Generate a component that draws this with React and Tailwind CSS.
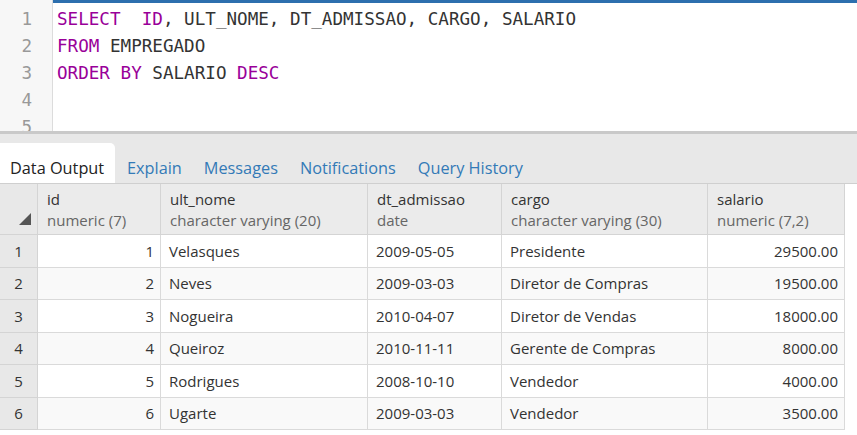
import React from "react";

const rows = [
  [1, "Velasques", "2009-05-05", "Presidente", "29500.00"],
  [2, "Neves", "2009-03-03", "Diretor de Compras", "19500.00"],
  [3, "Nogueira", "2010-04-07", "Diretor de Vendas", "18000.00"],
  [4, "Queiroz", "2010-11-11", "Gerente de Compras", "8000.00"],
  [5, "Rodrigues", "2008-10-10", "Vendedor", "4000.00"],
  [6, "Ugarte", "2009-03-03", "Vendedor", "3500.00"],
];

const cols = [
  ["id", "numeric (7)"],
  ["ult_nome", "character varying (20)"],
  ["dt_admissao", "date"],
  ["cargo", "character varying (30)"],
  ["salario", "numeric (7,2)"],
];

const K = ({ children }) => <span className="text-[#990099]">{children}</span>;

export default function App() {
  const lines = [
    <>
      <K>SELECT</K>{"  "}<K>ID</K>, ULT_NOME, DT_ADMISSAO, CARGO, SALARIO
    </>,
    <>
      <K>FROM</K> EMPREGADO
    </>,
    <>
      <K>ORDER</K> <K>BY</K> SALARIO <K>DESC</K>
    </>,
    "",
    "",
  ];

  const grid = "grid grid-cols-[38px_123px_207px_134px_206px_137px] w-[845px]";

  return (
    <div className="w-[857px] h-[435px] overflow-hidden bg-white font-['Open_Sans',sans-serif] text-[#333]">
      {/* editor */}
      <div className="flex h-[131px] overflow-hidden font-['DejaVu_Sans_Mono',monospace] text-[17.6px] leading-[27px]">
        <div className="w-[53px] shrink-0 bg-[#f7f7f7] border-r border-[#dcdcdc] pt-[6px] pr-[20px] text-right text-[#999]">
          {lines.map((_, i) => (
            <div key={i}>{i + 1}</div>
          ))}
        </div>
        <div className="flex-1 border-t-[3px] border-[#2d6fae] pt-[3px] pl-[4px] whitespace-pre text-[#333]">
          {lines.map((l, i) => (
            <div key={i} className="h-[27px]">{l}</div>
          ))}
        </div>
      </div>
      <div className="h-[3px] bg-[#c9c9c9]" />

      {/* tabs */}
      <div className="h-[49px] bg-[#e8e8e8] flex items-end text-[16.3px]">
        <div className="h-[40px] w-[115px] bg-white rounded-tr-[5px] pl-[10px] flex items-center pt-[10px] text-[#222]">
          Data Output
        </div>
        <div className="flex items-center h-[40px] pt-[10px] gap-[22px] pl-[12px] text-[#337ab7]">
          <span>Explain</span>
          <span>Messages</span>
          <span>Notifications</span>
          <span>Query History</span>
        </div>
      </div>

      {/* grid */}
      <div className="text-[15px] border-t border-[#cfcfcf]">
        <div className={grid + " h-[51px]"}>
          <div className="bg-[#e8e8e8] border-r border-b border-[#d4d4d4] flex items-end justify-end pr-[6px] pb-[9px]">
            <svg width="12" height="12" viewBox="0 0 12 12">
              <polygon points="12,0 12,12 0,12" fill="#555" />
            </svg>
          </div>
          {cols.map(([n, t]) => (
            <div key={n} className="bg-[#ebebeb] border-r border-b border-[#d4d4d4] pl-[9px] pt-[5px] leading-[21px]">
              <div className="text-[#333]">{n}</div>
              <div className="text-[#666]">{t}</div>
            </div>
          ))}
        </div>
        {rows.map((r, i) => {
          const bg = i % 2 === 0 ? "bg-white" : "bg-[#f9f9f9]";
          const cell = `${bg} border-r border-b border-[#dadada] flex items-center`;
          return (
            <div key={i} className={grid + " h-[32.5px]"}>
              <div className="bg-[#e8e8e8] border-r border-b border-[#d4d4d4] flex items-center justify-center">
                {i + 1}
              </div>
              <div className={cell + " justify-end pr-[6px]"}>{r[0]}</div>
              <div className={cell + " pl-[8px]"}>{r[1]}</div>
              <div className={cell + " pl-[8px]"}>{r[2]}</div>
              <div className={cell + " pl-[8px]"}>{r[3]}</div>
              <div className={cell + " justify-end pr-[6px]"}>{r[4]}</div>
            </div>
          );
        })}
      </div>
    </div>
  );
}
